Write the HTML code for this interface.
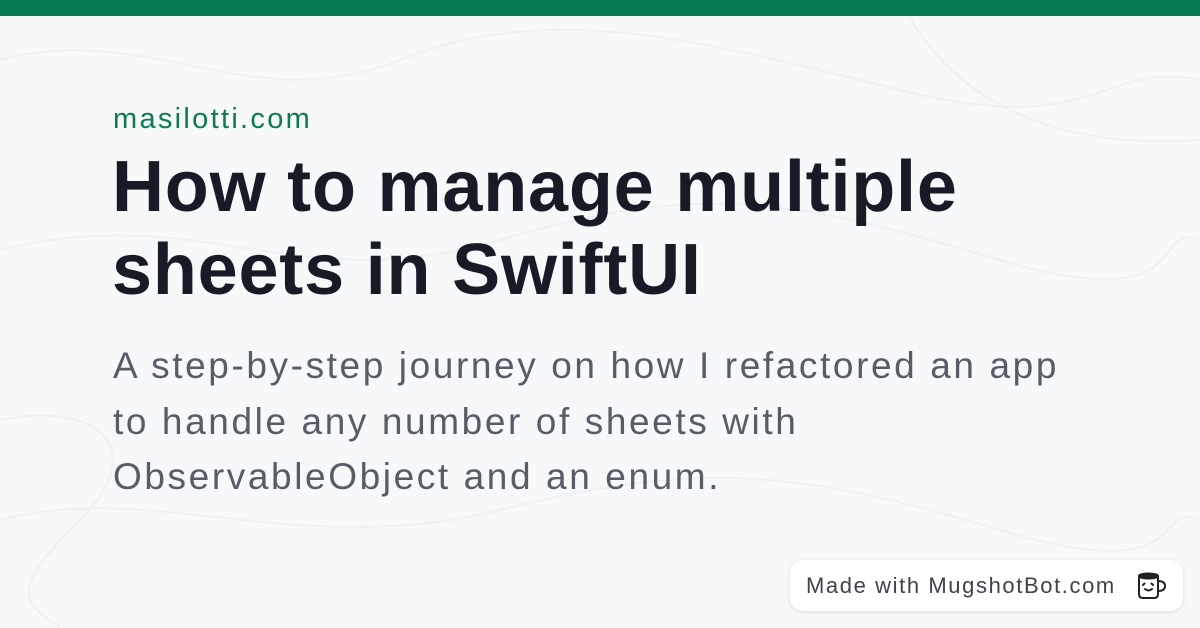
<!DOCTYPE html>
<html><head><meta charset="utf-8"><style>
html,body{margin:0;padding:0}
body{width:1200px;height:628px;background:#f7f8f9;position:relative;overflow:hidden;font-family:"Liberation Sans",sans-serif}
.bar{position:absolute;left:0;top:0;width:1200px;height:16px;background:#077953}
.dom{position:absolute;left:113px;top:101px;font-size:29px;color:#0e7a52;line-height:36px;letter-spacing:2.3px}
.t{position:absolute;left:112px;top:146px;font-size:72px;font-weight:bold;color:#161b26;line-height:83px;letter-spacing:0.8px;white-space:nowrap}
.s{position:absolute;left:113px;top:338px;font-size:37px;color:#575d66;line-height:55.5px;white-space:nowrap;letter-spacing:2.6px}
.b{position:absolute;left:790px;top:560px;width:393px;height:51px;background:#fff;border-radius:13px;box-shadow:0 1px 4px rgba(0,0,0,.12)}
.b span{position:absolute;left:16px;top:13px;font-size:22px;color:#3f434a;letter-spacing:1.6px}
.b svg{position:absolute;left:346px;top:10px}
</style></head><body>
<svg width="1200" height="628" style="position:absolute;left:0;top:0" fill="none" stroke="#eef0f2" stroke-width="2">
<path d="M0 60 C150 20 250 120 400 60 S700 40 900 90 S1100 60 1200 80"/>
<path d="M0 250 C200 200 300 300 500 240 S800 200 1000 260 S1150 220 1200 240"/>
<path d="M0 520 C150 480 300 560 500 510 S800 470 1000 530 S1150 500 1200 520"/>
<path d="M900 0 C950 100 1050 150 1200 140"/>
<path d="M0 420 C100 400 150 450 80 520 S20 600 60 628"/>
</svg>
<div class="bar"></div>
<div class="dom">masilotti.com</div>
<div class="t">How to manage multiple<br>sheets in SwiftUI</div>
<div class="s">A step-by-step journey on how I refactored an app<br>to handle any number of sheets with<br>ObservableObject and an enum.</div>
<div class="b"><span>Made with MugshotBot.com</span>
<svg width="34" height="32" viewBox="0 0 34 32" fill="none" stroke="#222" stroke-width="2" stroke-linecap="round" stroke-linejoin="round">
<path d="M3 6 V24 Q3 28 7 28 H18 Q22 28 22 24 V6"/>
<ellipse cx="12.5" cy="6" rx="9.5" ry="2.5" fill="#222"/>
<path d="M22 11 Q29 11 29 16 Q29 21 22 21"/>
<path d="M7 15 l1.5 -1.5 M17 15 l-1.5 -1.5"/>
<path d="M9 19 Q12.5 22 16 19"/>
</svg></div>
</body></html>
